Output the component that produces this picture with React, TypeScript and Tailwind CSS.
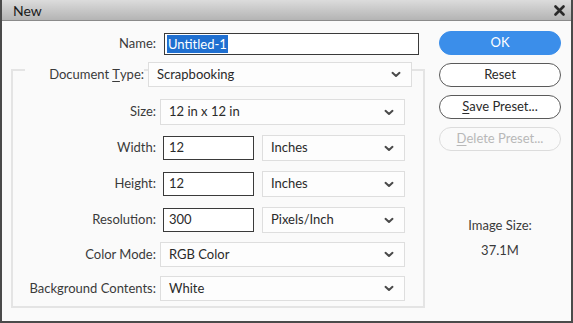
import React from 'react';

const font = { fontFamily: 'Lato, "Noto Sans", "Liberation Sans", sans-serif' };

function Chevron() {
  return (
    <svg width="10" height="7" viewBox="0 0 10 7" className="shrink-0">
      <path d="M1.5 1.8 L5 5 L8.5 1.8" fill="none" stroke="#4a4a4a" strokeWidth="2" strokeLinecap="round" strokeLinejoin="round" />
    </svg>
  );
}

function Select({ value, width, height = 26 }: { value: string; width: string; height?: number }) {
  return (
    <div
      className={`${width} flex items-center justify-between border border-[#dedede] bg-[#fdfdfd] pl-[8px] pr-[10px] text-[13px] text-[#2a2a2a]`}
      style={{ height }}
    >
      <span>{value}</span>
      <Chevron />
    </div>
  );
}

function TextBox({ value, width }: { value: string; width: string }) {
  return (
    <div className={`${width} h-[24px] flex items-center border border-[#3a3a3a] bg-white pl-[5px] text-[13px] text-[#2a2a2a]`}>
      {value}
    </div>
  );
}

function Label({ children }: { children: React.ReactNode }) {
  return <div className="w-[143px] shrink-0 text-right text-[13px] text-[#3a3a3a]">{children}</div>;
}

function PillButton({ children, variant }: { children: React.ReactNode; variant: 'primary' | 'normal' | 'disabled' }) {
  const cls =
    variant === 'primary'
      ? 'bg-[#3b8eea] text-white border-[#3b8eea]'
      : variant === 'normal'
      ? 'bg-white text-[#2a2a2a] border-[#5a5a5a]'
      : 'bg-[#fafafa] text-[#b8b8b8] border-[#dcdcdc]';
  return (
    <div className={`h-[24px] w-[122px] flex items-center justify-center rounded-full border text-[13px] ${cls}`}>
      {children}
    </div>
  );
}

export default function App() {
  return (
    <div style={font} className="w-[573px] h-[323px] flex flex-col bg-[#fafafa] border-x-2 border-b-2 border-[#4a4a4a] overflow-hidden">
      {/* title bar */}
      <div className="h-[21px] shrink-0 flex items-center justify-between pl-[11px] pr-[6px] bg-gradient-to-b from-[#dcdcdc] to-[#b4b4b4] border-b border-[#8a8a8a]">
        <span className="text-[14px] text-[#1a1a1a]">New</span>
        <svg width="11" height="11" viewBox="0 0 11 11">
          <path d="M1.5 1.5 L9.5 9.5 M9.5 1.5 L1.5 9.5" stroke="#2a2a2a" strokeWidth="2.6" strokeLinecap="round" />
        </svg>
      </div>

      <div className="flex pl-[9px]">
        {/* left column */}
        <div className="w-[414px] shrink-0 flex flex-col">
          <div className="mt-[12px] h-[22px] flex items-center">
            <div className="w-[145px] text-right text-[13px] text-[#3a3a3a]">Name:</div>
            <div className="ml-[8px] w-[255px] h-[22px] flex items-center border border-[#3a3a3a] bg-white pl-[2px]">
              <span className="bg-[#1f6fd0] text-white text-[13px] leading-[18px] px-[1px]">Untitled-1</span>
            </div>
          </div>

          <div className="mt-[14px] h-[239px] border-2 border-[#e4e4e4] flex flex-col">
            <div className="-mt-[9px] h-[25px] flex items-center">
              <div className="ml-[12px] w-[119px] h-full flex items-center justify-end bg-[#fafafa] text-[13px] text-[#3a3a3a]">
                Document <span className="underline underline-offset-2 ml-[3px]">T</span>ype:
              </div>
              <div className="ml-[4px]">
                <Select value="Scrapbooking" width="w-[264px]" height={25} />
              </div>
            </div>

            <div className="mt-[12px] flex items-center">
              <Label>Size:</Label>
              <div className="ml-[4px]">
                <Select value="12 in x 12 in" width="w-[245px]" />
              </div>
            </div>

            {[
              ['Width:', '12', 'Inches'],
              ['Height:', '12', 'Inches'],
              ['Resolution:', '300', 'Pixels/Inch'],
            ].map(([l, v, u]) => (
              <div key={l} className="mt-[10px] flex items-center">
                <Label>{l}</Label>
                <div className="ml-[7px]">
                  <TextBox value={v} width="w-[91px]" />
                </div>
                <div className="ml-[8px]">
                  <Select value={u} width="w-[143px]" />
                </div>
              </div>
            ))}

            <div className="mt-[9px] flex items-center">
              <Label>Color Mode:</Label>
              <div className="ml-[4px]">
                <Select value="RGB Color" width="w-[245px]" height={25} />
              </div>
            </div>

            <div className="mt-[9px] flex items-center">
              <Label>Background Contents:</Label>
              <div className="ml-[4px]">
                <Select value="White" width="w-[245px]" height={25} />
              </div>
            </div>
          </div>
        </div>

        {/* right column */}
        <div className="ml-[14px] w-[122px] flex flex-col">
          <div className="mt-[10px] flex flex-col gap-[8px]">
            <PillButton variant="primary">OK</PillButton>
            <PillButton variant="normal">Reset</PillButton>
            <PillButton variant="normal">
              <span className="underline underline-offset-2">S</span>ave Preset...
            </PillButton>
            <PillButton variant="disabled">
              <span className="underline underline-offset-2">D</span>elete Preset...
            </PillButton>
          </div>
          <div className="mt-[66px] text-center text-[13px] text-[#3a3a3a] leading-[16px]">Image Size:</div>
          <div className="mt-[9px] text-center text-[13px] text-[#3a3a3a] leading-[16px]">37.1M</div>
        </div>
      </div>
    </div>
  );
}
